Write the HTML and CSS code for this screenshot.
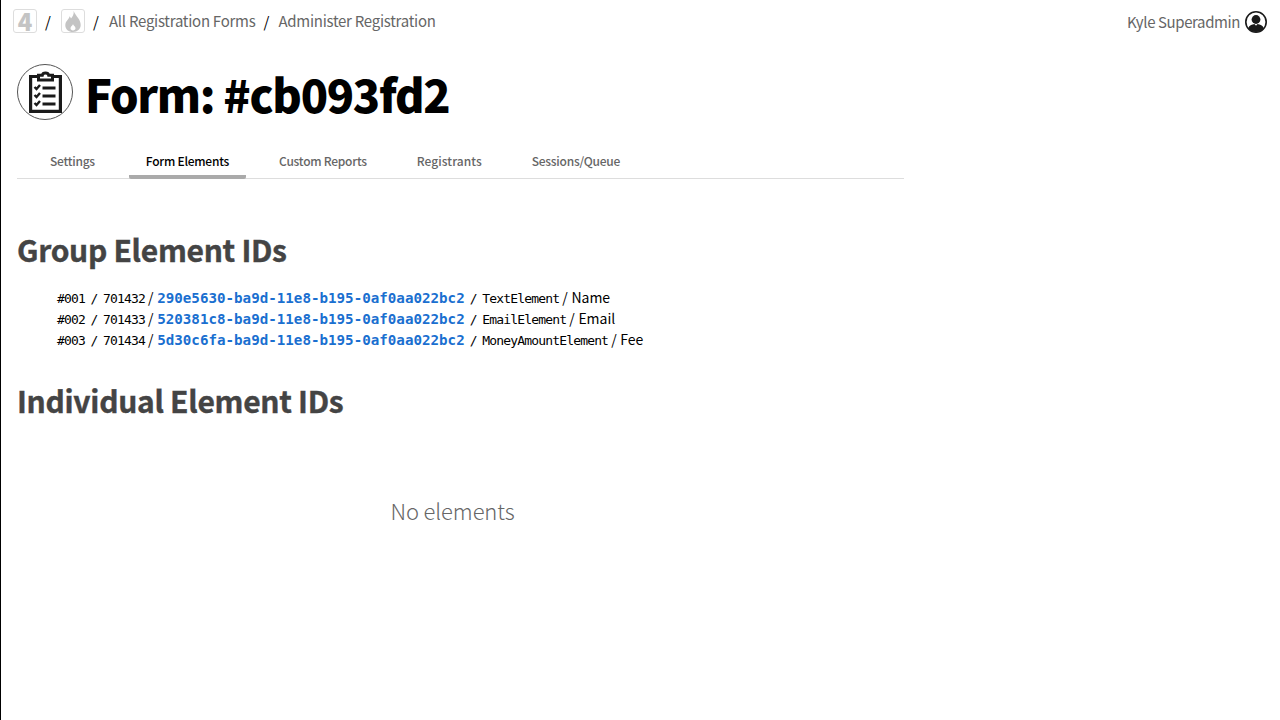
FILE: index.html
```html
<!DOCTYPE html>
<html lang="en">
<head>
    <meta charset="UTF-8">
    <title>Form: #cb093fd2</title>
    <link rel="stylesheet" href="styles.css">
</head>
<body>
    <!-- top bar -->
    <div class="topbar">
        <div class="crumbs">
            <a class="crumb-icon four">4</a>
            <span class="sep">/</span>
            <a class="crumb-icon">
                <svg width="16" height="21" viewBox="0 0 16 21"><path fill="#c4c4c4" d="M8.600 0c.6 3.400-1 5.400-2.600 7.500-.4-1-.8-1.600-1.500-2.200C4.400 8 .3 10 .3 14.200.3 18.200 3.700 21 8 21s7.700-2.800 7.700-6.900C15.700 8.400 11.100 5.600 8.600 0zM8 19.400c-1.400 0-2.500-.9-2.500-2.200 0-1.500 1.500-2.100 2.500-3.900 1 1.800 2.500 2.400 2.500 3.900 0 1.300-1.100 2.200-2.500 2.200z"/></svg>
            </a>
            <span class="sep">/</span>
            <a class="crumb-link">All Registration Forms</a>
            <span class="sep last">/</span>
            <a class="crumb-link">Administer Registration</a>
        </div>
        <div class="user">
            <span class="user-name">Kyle Superadmin</span>
            <svg width="22" height="22" viewBox="0 0 22 22">
                <circle cx="11" cy="11" r="10.200" fill="#fff" stroke="#1a1a1a" stroke-width="1.600"/>
                <circle cx="11" cy="8.500" r="4.400" fill="#1a1a1a"/>
                <path fill="#1a1a1a" d="M3.200 17.300c1-3 4-4.300 7.800-4.300s6.800 1.300 7.800 4.300c-1.800 2.300-4.700 3.700-7.800 3.700s-6-1.400-7.800-3.700z"/>
                <path fill="#fff" d="M9.600 13h2.800L11 14.800z"/>
            </svg>
        </div>
    </div>

    <div class="main">
        <div class="title-row">
            <div class="title-icon">
                <svg width="33" height="42" viewBox="0 0 33 42" fill="none" stroke="#1a1a1a">
                    <path stroke-width="3.200" d="M9 5.500H1.600v34.900h29.800V5.500H24"/>
                    <path stroke-width="3" d="M9.500 9V4.200h3.800c.6-3 5.800-3 6.400 0h3.800V9z"/>
                    <path stroke-width="2.400" d="M5.500 16l2 2 3.500-4M5.500 24l2 2 3.500-4M5.500 32l2 2 3.500-4"/>
                    <path stroke-width="3" d="M13.500 17h13M13.500 25h13M13.500 33h13"/>
                </svg>
            </div>
            <h1>Form: #cb093fd2</h1>
        </div>

        <div class="tabs">
            <a class="tab">Settings</a>
            <a class="tab active">Form Elements</a>
            <a class="tab">Custom Reports</a>
            <a class="tab loose">Registrants</a>
            <a class="tab">Sessions/Queue</a>
        </div>

        <h2>Group Element IDs</h2>
        <ul class="ids">
            <li><span class="mono">#001 / 701432</span><span class="slash">/</span><a class="uuid">290e5630-ba9d-11e8-b195-0af0aa022bc2</a><span class="mono type">/ TextElement</span><span class="slash">/</span><span class="name">Name</span></li>
            <li><span class="mono">#002 / 701433</span><span class="slash">/</span><a class="uuid">520381c8-ba9d-11e8-b195-0af0aa022bc2</a><span class="mono type">/ EmailElement</span><span class="slash">/</span><span class="name">Email</span></li>
            <li><span class="mono">#003 / 701434</span><span class="slash">/</span><a class="uuid">5d30c6fa-ba9d-11e8-b195-0af0aa022bc2</a><span class="mono type">/ MoneyAmountElement</span><span class="slash">/</span><span class="name">Fee</span></li>
        </ul>

        <h2 class="second">Individual Element IDs</h2>
        <p class="empty">No elements</p>
    </div>
</body>
</html>
```

FILE: styles.css
```css
* {
    margin: 0;
    padding: 0;
    box-sizing: border-box;
}

body {
    min-height: 720px;
    border-left: 1px solid #000;
    background: #fff;
    color: #000;
    font-family: "Noto Sans CJK SC", "Noto Sans", sans-serif;
    font-size: 15px;
    letter-spacing: -0.27px;
}

.topbar {
    display: flex;
    justify-content: space-between;
    align-items: flex-start;
    padding: 9px 13px 0 12px;
}

.crumbs {
    display: flex;
    align-items: center;
    height: 24px;
    color: #666;
}

.crumb-link {
    position: relative;
    top: -1px;
    color: #666;
}

.crumb-icon {
    display: flex;
    align-items: center;
    justify-content: center;
    width: 24px;
    height: 24px;
    border: 1px solid #ddd;
    border-radius: 3px;
}

.four {
    color: #c4c4c4;
    font-size: 24px;
    font-weight: 900;
    line-height: 1;
}

.sep {
    width: 6px;
    margin: 0 10px 0 8px;
    color: #000;
}

.sep.last {
    margin-right: 9px;
}

.user {
    display: flex;
    align-items: center;
    gap: 5px;
    height: 26px;
    color: #666;
}

.user-name {
    position: relative;
    top: -1px;
    letter-spacing: -0.4px;
}

.main {
    width: 903px;
    padding-left: 16px;
}

.title-row {
    display: flex;
    align-items: center;
    gap: 12px;
    margin-top: 26px;
}

.title-icon {
    display: flex;
    align-items: center;
    justify-content: center;
    width: 56px;
    height: 56px;
    border: 1px solid #555;
    border-radius: 50%;
}

h1 {
    padding-top: 3px;
    font-size: 45px;
    font-weight: 900;
    letter-spacing: -1.3px;
    line-height: 59px;
}

.tabs {
    display: flex;
    margin-top: 21px;
    padding-left: 16px;
    border-bottom: 1px solid #ddd;
}

.tab {
    margin-right: 16px;
    margin-bottom: -1px;
    padding: 7px 17px 4px;
    border-bottom: 4px solid transparent;
    border-radius: 2px;
    color: #666;
    font-size: 12px;
    font-weight: 500;
    letter-spacing: -0.25px;
    line-height: 20px;
}

.tab:first-child {
    margin-right: 17px;
}

.tab.loose {
    letter-spacing: 0.05px;
}

.tab.active {
    border-bottom-color: #aaa;
    color: #000;
}

h2 {
    margin-top: 48px;
    color: #444;
    font-size: 30px;
    font-weight: 700;
    letter-spacing: -0.3px;
    line-height: 44px;
    -webkit-text-stroke: 0.4px #444;
}

h2.second {
    margin-top: 28px;
}

.ids {
    list-style: none;
    margin-top: 16px;
    padding-left: 40px;
    font-size: 14px;
    line-height: 21px;
}

.ids li {
    display: flex;
    align-items: baseline;
    height: 21px;
}

.mono {
    font-family: "DejaVu Sans Mono", monospace;
    font-size: 13px;
    letter-spacing: -0.83px;
    word-spacing: -1.5px;
}

.type {
    margin-left: 5px;
}

.slash {
    margin: 0 4px 0 3px;
}

.uuid {
    color: #1a6fd0;
    font-family: "DejaVu Sans Mono", monospace;
    font-size: 14.2px;
    font-weight: 700;
    letter-spacing: 0;
}

.name {
    letter-spacing: 0;
}

.empty {
    margin-top: 72px;
    padding-right: 16px;
    color: #666;
    font-size: 22px;
    font-weight: 300;
    letter-spacing: -0.1px;
    line-height: 32px;
    text-align: center;
}
```
